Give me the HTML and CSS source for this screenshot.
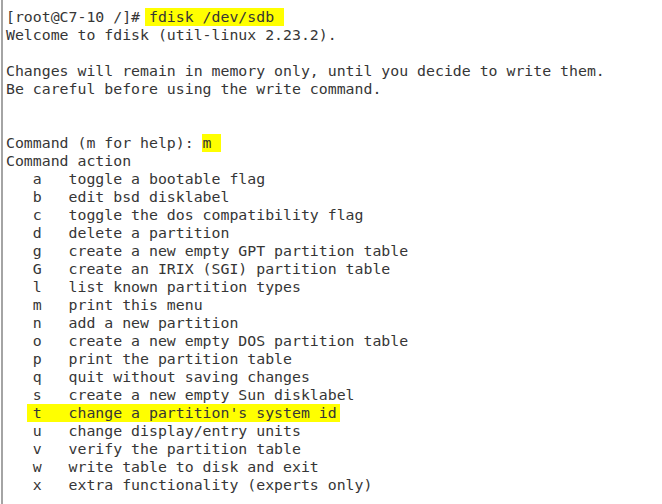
FILE: index.html
```html
<!DOCTYPE html>
<html>
<head>
<meta charset="utf-8">
<link rel="stylesheet" href="styles.css">
</head>
<body>
<div class="term"><pre class="out">[root@C7-10 /]# <span class="hl hl-cmd">fdisk /dev/sdb</span>
Welcome to fdisk (util-linux 2.23.2).

Changes will remain in memory only, until you decide to write them.
Be careful before using the write command.


Command (m for help): <span class="hl hl-m">m</span>
Command action
   a   toggle a bootable flag
   b   edit bsd disklabel
   c   toggle the dos compatibility flag
   d   delete a partition
   g   create a new empty GPT partition table
   G   create an IRIX (SGI) partition table
   l   list known partition types
   m   print this menu
   n   add a new partition
   o   create a new empty DOS partition table
   p   print the partition table
   q   quit without saving changes
   s   create a new empty Sun disklabel
   <span class="hl hl-t">t   change a partition's system id</span>
   u   change display/entry units
   v   verify the partition table
   w   write table to disk and exit
   x   extra functionality (experts only)
</pre></div>
</body>
</html>
```
FILE: styles.css
```css
html, body {
  margin: 0;
  padding: 0;
  background: #ffffff;
}
.term {
  margin-left: 1px;
  border-left: 2px solid #a4a4a4;
  height: 504px;
  box-sizing: border-box;
  padding: 8px 0 0 3px;
  overflow: hidden;
}
.out {
  margin: 0;
  font-family: "DejaVu Sans Mono", monospace;
  font-size: 14.85px;
  line-height: 18px;
  color: #363636;
  white-space: pre;
}
.hl {
  background: #ffff00;
}
.hl-cmd {
  box-shadow: -4px 0 0 #ffff00, 10px 0 0 #ffff00;
}
.hl-m {
  box-shadow: -1px 0 0 #ffff00, 9px 0 0 #ffff00;
}
.hl-t {
  box-shadow: -6px 0 0 #ffff00, 3px 0 0 #ffff00;
}
```
